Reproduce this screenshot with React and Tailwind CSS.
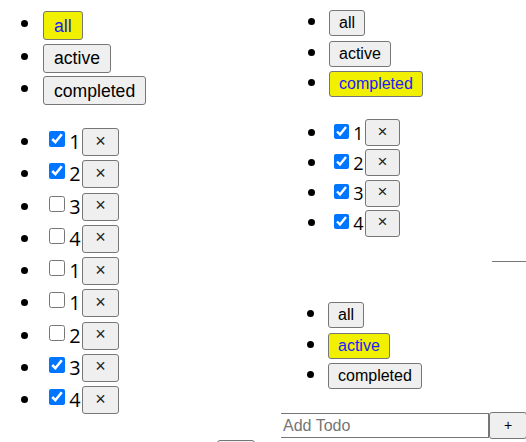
import { useState } from "react";

const FILTERS = ["all", "active", "completed"];

const LEFT_TODOS = [
  { text: "1", done: true },
  { text: "2", done: true },
  { text: "3", done: false },
  { text: "4", done: false },
  { text: "1", done: false },
  { text: "1", done: false },
  { text: "2", done: false },
  { text: "3", done: true },
  { text: "4", done: true },
];

const RIGHT_TODOS = [
  { text: "1", done: true },
  { text: "2", done: true },
  { text: "3", done: true },
  { text: "4", done: true },
];

// bullets drawn as 7px discs so they match the bigger windows-style markers
const DOT =
  "relative before:absolute before:content-[''] before:w-[7px] before:h-[7px] before:rounded-full before:bg-black";

function FilterList({ selected, big, className }) {
  const li = big
    ? "h-[32.5px] text-[17.6px] before:left-[-22px] before:top-[9px]"
    : "h-[30.5px] text-[16px] before:left-[-21.5px] before:top-[8px]";
  const btn = big
    ? "px-[10px] py-[3.5px] leading-[20px] text-[17.6px]"
    : "px-[9px] py-[3px] leading-[18px] text-[16px]";
  return (
    <ul className={className}>
      {FILTERS.map((f) => (
        <li key={f} className={`${DOT} ${li}`}>
          <button
            className={`${btn} border border-[#767676] rounded-[3px] ${
              f === selected ? "bg-[#f0f000] text-[#1a1aff]" : "bg-[#efefef] text-black"
            }`}
          >
            {f}
          </button>
        </li>
      ))}
    </ul>
  );
}

function TodoList({ todos, big, className }) {
  const li = big
    ? "h-[32.25px] text-[17.6px] before:left-[-22.5px] before:top-[10px]"
    : "h-[30.3px] text-[16px] before:left-[-21.5px] before:top-[9.5px]";
  return (
    <ul className={className}>
      {todos.map((t, i) => (
        <li key={i} className={`${DOT} ${li}`}>
          <div className="flex items-center">
            <input
              type="checkbox"
              defaultChecked={t.done}
              className={
                big
                  ? "w-[16px] h-[16px] ml-[6px] mr-[3px] mb-[6px]"
                  : "w-[15px] h-[15px] ml-[5px] mr-[3px] mb-[3px]"
              }
            />
            <span
              className={`font-['Open_Sans',sans-serif] text-center leading-none ${
                big ? "w-[14px] text-[19.8px]" : "w-[13px] text-[18px]"
              }`}
            >
              {t.text}
            </span>
            <button
              className={`flex items-center justify-center bg-[#efefef] border border-[#767676] rounded-[3px] text-[#222] font-light leading-none pb-[3px] ${
                big ? "w-[37px] h-[28px] text-[18px]" : "w-[35px] h-[27px] text-[17px]"
              }`}
            >
              ×
            </button>
          </div>
        </li>
      ))}
    </ul>
  );
}

export default function App() {
  const [draft, setDraft] = useState("");

  return (
    <div className="flex w-[526px] h-[442px] overflow-hidden bg-white text-black font-['Liberation_Sans',Arial,sans-serif]">
      {/* left pane, zoomed */}
      <div className="w-[280px] shrink-0">
        <FilterList selected="all" big className="mt-[11px] pl-[43px]" />
        <TodoList todos={LEFT_TODOS} big className="mt-[19.5px] pl-[43px]" />
        <div className="mt-[21.75px] ml-[217px] w-[38px] h-[12px] border border-[#767676] rounded-[3px] bg-[#efefef]" />
      </div>

      {/* right pane */}
      <div className="flex-1 min-w-0">
        <FilterList selected="completed" className="mt-[10px] pl-[49px]" />
        <TodoList todos={RIGHT_TODOS} className="mt-[17.5px] pl-[49px]" />
        <div className="mt-[21px] ml-[212px] h-px bg-[#767676] rounded-l-[2px]" />
        <FilterList selected="active" className="mt-[40px] pl-[48px]" />
        <div className="mt-[18.5px] flex items-start">
          <input
            value={draft}
            onChange={(e) => setDraft(e.target.value)}
            placeholder="Add Todo"
            className="mt-[1px] ml-[1px] w-[208px] h-[25px] border-y border-r border-[#767676] px-[2px] text-[16px] outline-none placeholder:text-[#757575]"
          />
          <button className="w-[38px] h-[27px] shrink-0 bg-[#efefef] border border-[#767676] rounded-[3px] text-[14px]">
            +
          </button>
        </div>
      </div>
    </div>
  );
}
